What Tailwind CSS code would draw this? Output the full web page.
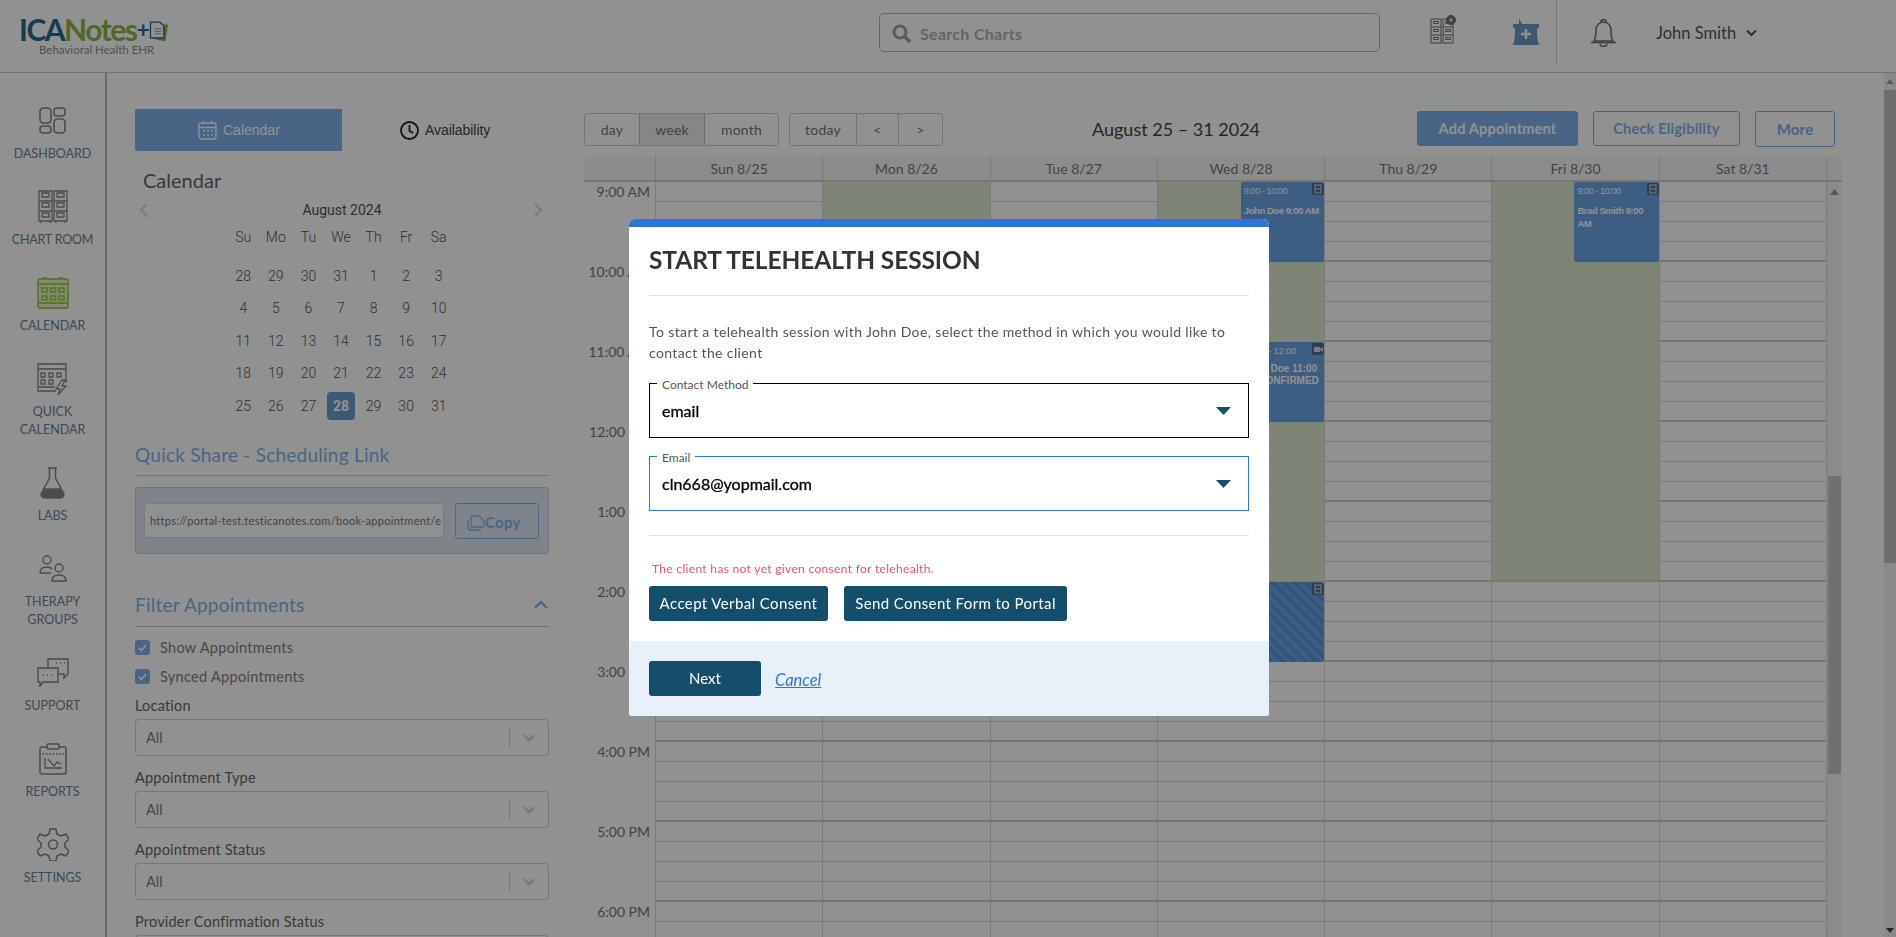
<!DOCTYPE html>
<html lang="en">
<head>
<meta charset="utf-8">
<title>ICANotes</title>
<script src="https://cdn.jsdelivr.net/npm/@tailwindcss/browser@4"></script>
</head>
<body class="m-0 overflow-hidden bg-white font-['Lato',sans-serif]">
<div class="w-[1896px] h-[937px] overflow-hidden flex flex-col bg-white">

  <!-- header -->
  <header class="h-[73px] shrink-0 border-b border-[#c9c9c9] flex relative">
    <div class="w-[879px] shrink-0 pl-[19px] pt-[14px]">
      <div class="flex items-center h-[30px]">
        <span class="text-[30px] leading-none font-bold tracking-[-1.500px] text-[#2a6a8a]">ICA</span><span class="text-[30px] leading-none font-bold tracking-[-1.500px] text-[#8fb548]">Notes</span><span class="text-[23px] leading-none font-bold text-[#2a6a8a]">+</span>
        <svg class="w-[20px] h-[25px] -ml-[2px] mt-[3px]" viewBox="0 0 24 28"><path d="M21 6l3 1-3 20-12-2z" fill="#8fb548"/><path d="M3 4h11l5 4v15H3z" fill="#fff" stroke="#2a6a8a" stroke-width="1.600"/><path d="M8 12h8M8 15h8M8 18h8" stroke="#9a9a9a" stroke-width="1.200"/></svg>
      </div>
      <div class="ml-[20px] text-[11.500px] leading-[12px] text-[#8d8d8d]">Behavioral Health EHR</div>
    </div>
    <div class="w-[501px] h-[39px] mt-[13px] rounded-[5px] border border-[#b5b5b5] flex items-center pl-[12px] gap-[8px]">
      <svg class="w-[20px] h-[20px] mt-[2px]" viewBox="0 0 20 20" fill="none" stroke="#a0a0a0"><circle cx="8" cy="8" r="6" stroke-width="3"/><path d="M12.500 12.500L18 18" stroke-width="3.400"/></svg>
      <span class="text-[16px] font-bold tracking-[.3px] text-[#b0b0b0] mt-[2px]">Search Charts</span>
    </div>
    <svg class="w-[26px] h-[29px] ml-[50px] mt-[15px]" viewBox="0 0 26 29" fill="none" stroke="#6f6f6f" stroke-width="1">
      <rect x="1" y="4" width="10" height="24"/><rect x="13" y="4" width="10" height="24"/><path d="M1 12h10M1 20h10M13 12h10M13 20h10M3.500 6.500h5v2h-5zM3.500 14.500h5v2h-5zM3.500 22.500h5v2h-5zM15.500 6.500h5v2h-5zM15.500 14.500h5v2h-5zM15.500 22.500h5v2h-5z"/>
      <circle cx="21" cy="5" r="4.500" fill="#6f6f6f"/><path d="M19 5h4M21 3v4" stroke="#fff"/>
    </svg>
    <svg class="w-[26px] h-[27px] ml-[57px] mt-[18px]" viewBox="0 0 26 27"><path d="M6 0l3 6h17v4h-2c0 6 0 12 2 17H0c2-5 2-11 2-17H0V6h6z" fill="#6f99c2"/><path d="M13 11v10M8 16h10" stroke="#fff" stroke-width="2.400"/></svg>
    <div class="w-px h-[65px] bg-[#d2d2d2] ml-[17px]"></div>
    <svg class="w-[29px] h-[29px] ml-[32px] mt-[18px]" viewBox="0 0 29 29" fill="none" stroke="#6f6f6f" stroke-width="1.500"><path d="M12 4a2.500 2.500 0 015 0"/><path d="M5 23c2-3 2-6 2-11a7.500 8 0 0115 0c0 5 0 8 2 11z"/><path d="M2 24.500h25"/><path d="M11 25.500a3.500 3 0 007 0"/></svg>
    <span class="ml-[38px] mt-[23px] text-[16.500px] leading-[20px] text-[#555]">John Smith</span>
    <svg class="w-[11px] h-[8px] ml-[10px] mt-[29px]" viewBox="0 0 11 8" fill="none" stroke="#555" stroke-width="2"><path d="M1 1.500l4.500 4.500L10 1.500"/></svg>
  </header>

  <div class="flex flex-1 min-h-0">
    <!-- sidebar -->
    <aside class="w-[107px] shrink-0 border-r-2 border-[#bdbdbd] pt-[26px] text-[12.500px] leading-[18px] text-[#6a8296] text-center">
      <div class="h-[86px] flex flex-col items-center">
        <div class="h-[38px] flex items-end pb-[3px]"><svg class="w-[27px] h-[27px]" viewBox="0 0 27 27" fill="none" stroke="#858585" stroke-width="1.600"><rect x="1" y="1" width="11" height="15" rx="3.500"/><rect x="15" y="1" width="11" height="8" rx="3"/><rect x="1" y="19" width="11" height="7" rx="3"/><rect x="15" y="12" width="11" height="14" rx="3.500"/></svg></div>
        <div class="mt-[8px]">DASHBOARD</div>
      </div>
      <div class="h-[86px] flex flex-col items-center">
        <div class="h-[38px] flex items-end"><svg class="w-[30px] h-[33px]" viewBox="0 0 30 33" fill="none" stroke="#858585" stroke-width="1.300"><path d="M1 1h13v30H1zM16 1h13v30H16zM1 11h13M1 21h13M16 11h13M16 21h13M4 3h7v4H4zM4 13h7v4H4zM4 23h7v4H4zM19 3h7v4h-7zM19 13h7v4h-7zM19 23h7v4h-7zM3 31v2M12 31v2M18 31v2M27 31v2"/></svg></div>
        <div class="mt-[8px] tracking-[-.2px]">CHART ROOM</div>
      </div>
      <div class="h-[86px] flex flex-col items-center">
        <div class="h-[38px] flex items-end"><svg class="w-[32px] h-[32px]" viewBox="0 0 32 32" fill="#e6f2d0" stroke="#a3cf55" stroke-width="1.800"><rect x="1" y="2" width="30" height="29" rx="2"/><path d="M1 7h30M1 26h30" fill="none"/><path d="M6 1h4M22 1h4" fill="none"/><rect x="5" y="11" width="5" height="4"/><rect x="13.500" y="11" width="5" height="4"/><rect x="22" y="11" width="5" height="4"/><rect x="5" y="19" width="5" height="4"/><rect x="13.500" y="19" width="5" height="4"/><rect x="22" y="19" width="5" height="4"/></svg></div>
        <div class="mt-[8px]">CALENDAR</div>
      </div>
      <div class="h-[104px] flex flex-col items-center">
        <div class="h-[38px] flex items-end"><svg class="w-[31px] h-[33px]" viewBox="0 0 31 33" fill="none" stroke="#858585" stroke-width="1.300"><path d="M19 29H1V2h28v19"/><path d="M1 7h28M1 25h17M5 1v2M24 1v2M4 11h4v4H4zM12 11h4v4h-4zM20 11h4v4h-4zM4 18h4v4H4zM12 18h4v4h-4z"/><path d="M25 18l-6 9h4l-2 6 8-9h-4l3-6z"/></svg></div>
        <div class="mt-[8px]">QUICK<br>CALENDAR</div>
      </div>
      <div class="h-[86px] flex flex-col items-center">
        <div class="h-[38px] flex items-end"><svg class="w-[25px] h-[32px]" viewBox="0 0 25 32" fill="none" stroke="#858585" stroke-width="1.500"><path d="M8 1h9M9.500 1v10L1.500 26a3.500 3.500 0 003 5h16a3.500 3.500 0 003-5l-8-15V1"/><path d="M5 22h15l3 6-2 2H4l-2-2z" fill="#858585"/></svg></div>
        <div class="mt-[8px]">LABS</div>
      </div>
      <div class="h-[104px] flex flex-col items-center">
        <div class="h-[38px] flex items-end pb-[3px]"><svg class="w-[28px] h-[27px]" viewBox="0 0 28 27" fill="none" stroke="#858585" stroke-width="1.400"><circle cx="8" cy="5" r="4"/><path d="M1 18c0-4 3-6 7-6 2 0 4 .500 5 2M1 18h11"/><circle cx="20" cy="13" r="4"/><path d="M13 26c0-4 3-6 7-6s7 2 7 6z"/></svg></div>
        <div class="mt-[8px]">THERAPY<br>GROUPS</div>
      </div>
      <div class="h-[86px] flex flex-col items-center">
        <div class="h-[38px] flex items-end pb-[2px]"><svg class="w-[32px] h-[29px]" viewBox="0 0 32 29" fill="none" stroke="#858585" stroke-width="1.400"><path d="M11 9V1h20v15l-4 4v-4h-6"/><path d="M1 10h20v14H6l-3 4v-4H1z" fill="#fff"/><path d="M19 5h1M23 5h1M27 5h1M6 17h1M10 17h1M14 17h1" stroke-width="1.500"/></svg></div>
        <div class="mt-[8px]">SUPPORT</div>
      </div>
      <div class="h-[86px] flex flex-col items-center">
        <div class="h-[38px] flex items-end"><svg class="w-[28px] h-[32px]" viewBox="0 0 28 32" fill="none" stroke="#858585" stroke-width="1.500"><rect x="1" y="4" width="26" height="27" rx="1.500"/><rect x="8" y="1" width="12" height="5" rx="1" fill="#fff"/><path d="M3 11h22" stroke-dasharray="2 1.500"/><path d="M6 15v10h17M9 16l6 7 3-4 4 2" stroke-width="1.300"/></svg></div>
        <div class="mt-[8px]">REPORTS</div>
      </div>
      <div class="h-[86px] flex flex-col items-center">
        <div class="h-[38px] flex items-end"><svg class="w-[32px] h-[33px]" viewBox="0 0 32 33" fill="none" stroke="#858585" stroke-width="1.500"><circle cx="16" cy="16.500" r="4.500"/><path d="M13 1h6l1 5 4 2 5-2 3 5-4 4v4l4 4-3 5-5-2-4 2-1 5h-6l-1-5-4-2-5 2-3-5 4-4v-4L0 11l3-5 5 2 4-2z" stroke-linejoin="round"/></svg></div>
        <div class="mt-[8px]">SETTINGS</div>
      </div>
    </aside>

    <!-- left panel -->
    <section class="w-[442px] shrink-0 pl-[28px] pt-[36px] overflow-hidden">
      <div class="w-[414px]">
        <div class="flex h-[42px]">
          <div class="w-[207px] bg-[#7fb2ea] rounded-l-[2px] flex items-center pl-[63px] gap-[6px] text-[14px] font-['Liberation_Sans',sans-serif] text-white">
            <svg class="w-[19px] h-[20px]" viewBox="0 0 19 20" fill="none" stroke="#fff" stroke-width="1.300"><rect x="1" y="3" width="17" height="16" rx="2"/><path d="M1 7.500h17M5 1v3M14 1v3M5 11h2M9 11h2M13 11h2M5 15h2M9 15h2M13 15h2"/></svg>
            Calendar
          </div>
          <div class="flex items-center pl-[58px] gap-[6px] text-[14px] tracking-[-.05px] font-['Liberation_Sans',sans-serif] text-[#444]">
            <svg class="w-[19px] h-[21px]" viewBox="0 0 19 21" fill="none" stroke="#222" stroke-width="1.800"><circle cx="9.500" cy="10.500" r="8.500"/><path d="M9.500 5v6l3.500 2"/></svg>
            Availability
          </div>
        </div>
        <div class="mt-[17px] h-[24px] pl-[8px] text-[20px] leading-[24px] text-[#666]">Calendar</div>
        <div class="mt-[8px] h-[20px] relative flex justify-center items-center text-[14px] font-['Roboto',sans-serif] text-[#555]">
          <svg class="absolute left-[4px] top-[3px] w-[10px] h-[14px]" viewBox="0 0 10 14" fill="none" stroke="#dcdcdc" stroke-width="2.400"><path d="M8 1L2 7l6 6"/></svg>
          August 2024
          <svg class="absolute right-[6px] top-[3px] w-[10px] h-[14px]" viewBox="0 0 10 14" fill="none" stroke="#dcdcdc" stroke-width="2.400"><path d="M2 1l6 6-6 6"/></svg>
        </div>
        <div class="ml-[92px] mt-[8px] w-[228px] font-['Roboto',sans-serif] font-light text-[14px] text-[#555] text-center">
          <div class="grid grid-cols-7 h-[18px] leading-[18px] mb-[13.750px]"><span>Su</span><span>Mo</span><span>Tu</span><span>We</span><span>Th</span><span>Fr</span><span>Sa</span></div>
          <div class="grid grid-cols-7 auto-rows-[32.500px] items-center">
            <span>28</span><span>29</span><span>30</span><span>31</span><span>1</span><span>2</span><span>3</span>
            <span>4</span><span>5</span><span>6</span><span>7</span><span>8</span><span>9</span><span>10</span>
            <span>11</span><span>12</span><span>13</span><span>14</span><span>15</span><span>16</span><span>17</span>
            <span>18</span><span>19</span><span>20</span><span>21</span><span>22</span><span>23</span><span>24</span>
            <span>25</span><span>26</span><span>27</span><span class="mx-auto w-[28px] h-[28px] rounded-[4px] bg-[#6a9fd0] text-white font-bold leading-[28px]">28</span><span>29</span><span>30</span><span>31</span>
          </div>
        </div>
        <div class="mt-[20px] h-[34px] border-b border-[#c9c9c9] text-[19px] leading-[26px] tracking-[.24px] text-[#7fb2ea]">Quick Share - Scheduling Link</div>
        <div class="mt-[11px] h-[67px] border border-[#c4cedb] rounded-[3px] bg-[#dfe8f4] pl-[8px] pt-[15px] flex gap-[11px]">
          <div class="w-[300px] h-[35px] bg-white/90 border border-[#d8d8d8] rounded-[3px] px-[5px] text-[11px] leading-[33px] tracking-[.3px] text-[#777] overflow-hidden whitespace-nowrap">https://portal-test.testicanotes.com/book-appointment/e</div>
          <div class="w-[84px] h-[36px] border border-[#7fb2ea] rounded-[3px] flex items-center pl-[11px] text-[15px] font-bold tracking-[.3px] text-[#7fb2ea]">
            <svg class="w-[18px] h-[16px] mt-[4px]" viewBox="0 0 18 16" fill="none" stroke="#7fb2ea" stroke-width="1.300"><path d="M1 5v7a3 3 0 003 3h10"/><path d="M4 3a2 2 0 012-2h6l5 5v4a2 2 0 01-2 2H6a2 2 0 01-2-2z"/></svg>
            <span class="mt-[1px]">Copy</span>
          </div>
        </div>
        <div class="mt-[38px] h-[35px] border-b border-[#c9c9c9] flex justify-between text-[19px] leading-[26px] tracking-[.23px] text-[#7fb2ea]">
          <span>Filter Appointments</span>
          <svg class="w-[14px] h-[10px] mt-[8px] mr-[1px]" viewBox="0 0 14 10" fill="none" stroke="#7fb2ea" stroke-width="2.200"><path d="M1 8l6-6 6 6"/></svg>
        </div>
        <div class="mt-[13px] h-[15px] flex items-center gap-[10px] text-[14.500px] tracking-[.3px] text-[#808080]">
          <span class="w-[15px] h-[15px] rounded-[3px] bg-[#7fb2ea] flex items-center justify-center"><svg class="w-[9px] h-[8px]" viewBox="0 0 9 8" fill="none" stroke="#fff" stroke-width="1.800"><path d="M1 4l2.500 2.500L8 1"/></svg></span>Show Appointments
        </div>
        <div class="mt-[14px] h-[15px] flex items-center gap-[10px] text-[14.500px] tracking-[.3px] text-[#808080]">
          <span class="w-[15px] h-[15px] rounded-[3px] bg-[#7fb2ea] flex items-center justify-center"><svg class="w-[9px] h-[8px]" viewBox="0 0 9 8" fill="none" stroke="#fff" stroke-width="1.800"><path d="M1 4l2.500 2.500L8 1"/></svg></span>Synced Appointments
        </div>
        <div class="mt-[11px] h-[20px] text-[14.500px] leading-[21px] tracking-[.2px] text-[#666]">Location</div>
        <div class="mt-[4px] h-[37px] border border-[#cfcfcf] rounded-[4px] flex items-center pl-[10px] text-[14.500px] text-[#808080]">All<span class="ml-auto w-px h-[20px] bg-[#cfcfcf]"></span><svg class="w-[12px] h-[8px] mx-[13px]" viewBox="0 0 12 8" fill="none" stroke="#cfcfcf" stroke-width="2"><path d="M1 1l5 5 5-5"/></svg></div>
        <div class="mt-[11px] h-[20px] text-[14.500px] leading-[21px] tracking-[.2px] text-[#666]">Appointment Type</div>
        <div class="mt-[4px] h-[37px] border border-[#cfcfcf] rounded-[4px] flex items-center pl-[10px] text-[14.500px] text-[#808080]">All<span class="ml-auto w-px h-[20px] bg-[#cfcfcf]"></span><svg class="w-[12px] h-[8px] mx-[13px]" viewBox="0 0 12 8" fill="none" stroke="#cfcfcf" stroke-width="2"><path d="M1 1l5 5 5-5"/></svg></div>
        <div class="mt-[11px] h-[20px] text-[14.500px] leading-[21px] tracking-[.2px] text-[#666]">Appointment Status</div>
        <div class="mt-[4px] h-[37px] border border-[#cfcfcf] rounded-[4px] flex items-center pl-[10px] text-[14.500px] text-[#808080]">All<span class="ml-auto w-px h-[20px] bg-[#cfcfcf]"></span><svg class="w-[12px] h-[8px] mx-[13px]" viewBox="0 0 12 8" fill="none" stroke="#cfcfcf" stroke-width="2"><path d="M1 1l5 5 5-5"/></svg></div>
        <div class="mt-[11px] h-[20px] text-[14.500px] leading-[21px] tracking-[.2px] text-[#666]">Provider Confirmation Status</div>
        <div class="mt-[4px] h-[37px] border border-[#cfcfcf] rounded-[4px]"></div>
      </div>
    </section>

    <!-- calendar -->
    <main class="w-[1258px] ml-[35px] shrink-0 pt-[38px] flex flex-col min-h-0">
      <div class="h-[36px] flex items-center shrink-0">
        <div class="flex h-[33px] border border-[#cdcdcd] rounded-[4px] text-[14px] text-[#777] tracking-[.2px]">
          <span class="w-[54px] flex items-center justify-center">day</span>
          <span class="w-[66px] flex items-center justify-center bg-[#ececec] border-x border-[#bdbdbd]">week</span>
          <span class="w-[73px] flex items-center justify-center">month</span>
        </div>
        <div class="flex h-[33px] ml-[10px] border border-[#cdcdcd] rounded-[4px] text-[14px] text-[#777] tracking-[.2px]">
          <span class="w-[67px] flex items-center justify-center border-r border-[#cdcdcd]">today</span>
          <span class="w-[42px] flex items-center justify-center border-r border-[#cdcdcd]">&lt;</span>
          <span class="w-[43px] flex items-center justify-center">&gt;</span>
        </div>
        <div class="ml-[149px] text-[18px] text-[#444]">August 25 – 31 2024</div>
        <div class="ml-auto mr-[7px] flex gap-[15px] text-[14.500px] font-bold tracking-[.2px]">
          <span class="w-[161px] h-[35px] flex items-center justify-center rounded-[3px] bg-[#7fb2ea] text-white">Add Appointment</span>
          <span class="w-[147px] h-[35px] flex items-center justify-center rounded-[3px] border border-[#7fb2ea] text-[#7fb2ea]">Check Eligibility</span>
          <span class="w-[80px] h-[36px] flex items-center justify-center rounded-[3px] border border-[#7fb2ea] text-[15px] text-[#7fb2ea]">More</span>
        </div>
      </div>
      <div class="mt-[10px] flex-1 min-h-0 flex flex-col overflow-hidden rounded-t-[5px] bg-white">
        <div class="h-[25px] shrink-0 grid grid-cols-[71px_repeat(7,1fr)_16px] bg-[#f7f7f7] border-b-2 border-[#cfcfcf] text-[14px] text-[#777] text-center leading-[23px]">
          <span></span>
          <span class="border-l border-[#d8d8d8]">Sun 8/25</span><span class="border-l border-[#d8d8d8]">Mon 8/26</span><span class="border-l border-[#d8d8d8]">Tue 8/27</span><span class="border-l border-[#d8d8d8]">Wed 8/28</span><span class="border-l border-[#d8d8d8]">Thu 8/29</span><span class="border-l border-[#d8d8d8]">Fri 8/30</span><span class="border-l border-[#d8d8d8]">Sat 8/31</span><span class="border-l border-[#d8d8d8]"></span>
        </div>
        <div class="flex-1 min-h-0 overflow-hidden grid grid-cols-[71px_repeat(7,1fr)_16px]">
          <div class="text-right pr-[5px] text-[14px] text-[#777]">
            <div class="h-[80px] leading-[20px]">9:00 AM</div><div class="h-[80px] leading-[20px]">10:00 AM</div><div class="h-[80px] leading-[20px]">11:00 AM</div><div class="h-[80px] leading-[20px]">12:00 PM</div><div class="h-[80px] leading-[20px]">1:00 PM</div><div class="h-[80px] leading-[20px]">2:00 PM</div><div class="h-[80px] leading-[20px]">3:00 PM</div><div class="h-[80px] leading-[20px]">4:00 PM</div><div class="h-[80px] leading-[20px]">5:00 PM</div><div class="h-[80px] leading-[20px]">6:00 PM</div>
          </div>
          <div class="day relative border-l border-[#d8d8d8]"></div>
          <div class="day relative border-l border-[#d8d8d8]"><div class="absolute left-0 right-0 top-0 h-[399px] bg-[#dbe7cd]/95"></div></div>
          <div class="day relative border-l border-[#d8d8d8]"></div>
          <div class="day relative border-l border-[#d8d8d8]">
            <div class="absolute left-0 right-0 top-0 h-[399px] bg-[#dbe7cd]/95"></div>
            <div class="absolute left-[83px] right-0 top-0 h-[80px] z-[1] rounded-[2px] bg-[#6ba5e7] text-white font-['Liberation_Sans',sans-serif] pl-[3px] pt-[3px] overflow-hidden">
              <span class="absolute right-0 top-[1px] w-[12px] h-[12px] rounded-[2px] bg-[#4b6e96] flex items-center justify-center"><svg class="w-[8px] h-[10px]" viewBox="0 0 8 10" fill="none" stroke="#ddd"><rect x="1" y="1" width="6" height="8"/><path d="M1 5h6"/></svg></span>
              <div class="text-[9px] leading-[12px] tracking-[-.4px]">9:00 - 10:00</div>
              <div class="mt-[7px] text-[9.500px] font-bold leading-[13px] tracking-[-.45px]">John Doe 9:00 AM</div>
            </div>
            <div class="absolute left-[83px] right-0 top-[160px] h-[80px] z-[1] rounded-[2px] bg-[#6ba5e7] text-white font-['Liberation_Sans',sans-serif] pl-[3px] pt-[3px] overflow-hidden">
              <span class="absolute right-0 top-[1px] w-[12px] h-[12px] rounded-[2px] bg-[#4b6e96] flex items-center justify-center"><svg class="w-[9px] h-[7px]" viewBox="0 0 9 7" fill="#ddd"><rect y="1" width="6" height="5"/><path d="M6 3l3-2v5L6 4z"/></svg></span>
              <div class="text-[9px] leading-[12px]">11:00 - 12:00</div>
              <div class="mt-[6px] text-[10px] font-bold leading-[12px]">John Doe 11:00 UNCONFIRMED</div>
            </div>
            <div class="absolute left-[83px] right-0 top-[400px] h-[80px] z-[1] rounded-[2px] bg-[repeating-linear-gradient(45deg,#6ba5e7_0,#6ba5e7_4px,#5a96dc_4px,#5a96dc_8px)]">
              <span class="absolute right-0 top-[1px] w-[12px] h-[12px] rounded-[2px] bg-[#4b6e96] flex items-center justify-center"><svg class="w-[8px] h-[10px]" viewBox="0 0 8 10" fill="none" stroke="#ddd"><rect x="1" y="1" width="6" height="8"/><path d="M1 5h6"/></svg></span>
            </div>
          </div>
          <div class="day relative border-l border-[#d8d8d8]"></div>
          <div class="day relative border-l border-[#d8d8d8]">
            <div class="absolute left-0 right-0 top-0 h-[399px] bg-[#dbe7cd]/95"></div>
            <div class="absolute left-[82px] right-0 top-0 h-[80px] z-[1] rounded-[2px] bg-[#6ba5e7] text-white font-['Liberation_Sans',sans-serif] pl-[3px] pt-[3px] overflow-hidden">
              <span class="absolute right-0 top-[1px] w-[12px] h-[12px] rounded-[2px] bg-[#4b6e96] flex items-center justify-center"><svg class="w-[8px] h-[10px]" viewBox="0 0 8 10" fill="none" stroke="#ddd"><rect x="1" y="1" width="6" height="8"/><path d="M1 5h6"/></svg></span>
              <div class="text-[9px] leading-[12px] tracking-[-.4px]">9:00 - 10:00</div>
              <div class="mt-[7px] text-[9.500px] font-bold leading-[13px] tracking-[-.45px] w-[70px]">Brad Smith 9:00 AM</div>
            </div>
          </div>
          <div class="day relative border-l border-[#d8d8d8]"></div>
          <div class="relative border-l border-[#d8d8d8] bg-[#f4f4f4]">
            <svg class="absolute left-[3px] top-[7px] w-[9px] h-[6px]" viewBox="0 0 9 6" fill="#999"><path d="M4.500 0L9 6H0z"/></svg>
            <div class="absolute left-[1px] w-[13px] top-[294px] h-[298px] bg-[#c6c6c6]"></div>
          </div>
        </div>
      </div>
    </main>

    <!-- page scrollbar -->
    <div class="ml-auto w-[12px] shrink-0 bg-[#f1f1f1] relative">
      <svg class="absolute left-[2px] top-[6px] w-[8px] h-[5px]" viewBox="0 0 8 5" fill="#a0a0a0"><path d="M4 0l4 5H0z"/></svg>
      <div class="absolute left-0 w-[12px] top-[17px] h-[473px] bg-[#c1c1c1]"></div>
      <svg class="absolute left-[2px] bottom-[4px] w-[8px] h-[5px]" viewBox="0 0 8 5" fill="#444"><path d="M0 0h8L4 5z"/></svg>
    </div>
  </div>
</div>

<!-- dim layer and dialog -->
<div class="fixed inset-0 z-10 bg-black/43">
  <div class="ml-[629px] mt-[219px] w-[640px] h-[497px] bg-white rounded-t-[6px] rounded-b-[3px] overflow-hidden flex flex-col">
    <div class="h-[8px] shrink-0 bg-[#2e75d9]"></div>
    <div class="px-[20px] shrink-0">
      <div class="h-[69px] pt-[18px] border-b border-[#e3e3e3] text-[24.500px] leading-[30px] font-bold tracking-[-.1px] text-[#333]">START TELEHEALTH SESSION</div>
      <p class="mt-[24.500px] text-[14px] leading-[21px] tracking-[.38px] text-[#555]">To start a telehealth session with John Doe, select the method in which you would like to contact the client</p>
      <div class="relative mt-[20.500px] h-[55px] border border-black flex items-center pl-[12px] pr-[17px] text-[16px] [-webkit-text-stroke:0.3px_black] text-black">
        <span class="absolute left-[7px] -top-[7px] bg-white px-[5px] text-[12px] leading-[16px] text-[#555] [-webkit-text-stroke:0]">Contact Method</span>
        email
        <svg class="ml-auto w-[15px] h-[8px]" viewBox="0 0 15 8" fill="#15506b"><path d="M0 0h15L7.500 8z"/></svg>
      </div>
      <div class="relative mt-[18px] h-[55px] border border-[#2e75d9] flex items-center pl-[12px] pr-[17px] text-[16px] [-webkit-text-stroke:0.3px_black] text-black">
        <span class="absolute left-[7px] -top-[7px] bg-white px-[5px] text-[12px] leading-[16px] text-[#555] [-webkit-text-stroke:0]">Email</span>
        cln668@yopmail.com
        <svg class="ml-auto w-[15px] h-[8px]" viewBox="0 0 15 8" fill="#15506b"><path d="M0 0h15L7.500 8z"/></svg>
      </div>
      <div class="mt-[24px] border-b border-[#e3e3e3]"></div>
      <div class="mt-[25px] h-[16px] pl-[3px] text-[12px] leading-[16px] tracking-[.32px] text-[#e8566f]">The client has not yet given consent for telehealth.</div>
      <div class="mt-[9px] flex gap-[16px] text-[15px] tracking-[.4px] text-white">
        <span class="w-[179px] h-[35px] rounded-[3px] bg-[#144e6b] flex items-center justify-center">Accept Verbal Consent</span>
        <span class="w-[223px] h-[35px] rounded-[3px] bg-[#144e6b] flex items-center justify-center">Send Consent Form to Portal</span>
      </div>
    </div>
    <div class="mt-[20px] flex-1 bg-[#e8f0fa] pl-[20px] pt-[20px] flex gap-[14px] items-start text-[15px]">
      <span class="w-[112px] h-[35px] rounded-[3px] bg-[#144e6b] text-white flex items-center justify-center">Next</span>
      <a class="h-[35px] leading-[38px] text-[16.500px] italic underline text-[#2e75d9]">Cancel</a>
    </div>
  </div>
</div>

<script>
document.querySelectorAll('.day').forEach(function (col) {
  var rows = '';
  for (var h = 0; h < 10; h++) {
    rows += '<div class="h-[20px] border-b border-[#d6d6d6]"></div><div class="h-[20px] border-b border-[#d6d6d6]"></div><div class="h-[20px] border-b border-[#d6d6d6]"></div><div class="h-[20px] border-b-2 border-[#cfcfcf]"></div>';
  }
  col.insertAdjacentHTML('afterbegin', rows);
});
</script>
</body>
</html>
